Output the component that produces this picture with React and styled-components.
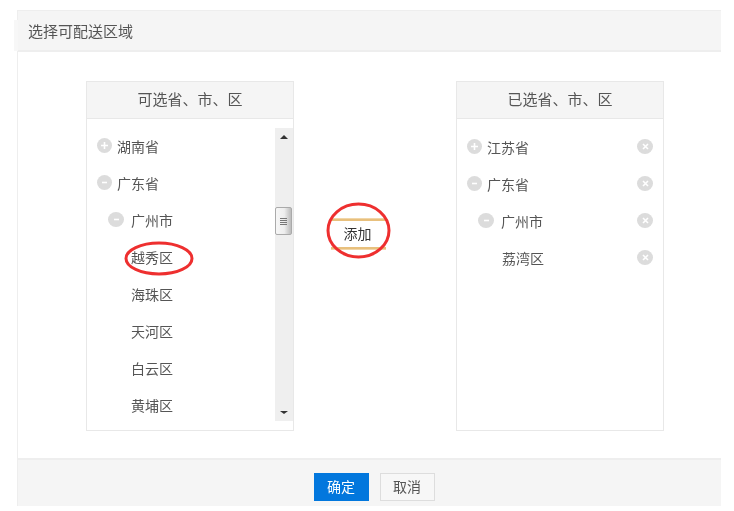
import React from 'react';

import styled, { createGlobalStyle } from 'styled-components';

const GlobalStyle = createGlobalStyle`
  html, body {
    background: #fff;
    margin: 0;
  }

  body {
    color: #555;
    font-family: "Liberation Sans", "Noto Sans CJK SC", sans-serif;
    font-size: 14px;
  }
`;

const Dialog = styled.div`
  border-left: 1px solid #eee;
  border-top: 1px solid #eee;
  box-sizing: border-box;
  filter: blur(0.35px);
  margin: 10px 0 0 17px;
  position: relative;
  width: 704px;

  &::before {
    background: #f7f7f7;
    content: '';
    height: 31px;
    left: -4px;
    position: absolute;
    top: 9px;
    width: 4px;
  }
`;

const Header = styled.div`
  align-items: center;
  background: #f5f5f5;
  border-bottom: 2px solid #eee;
  box-sizing: border-box;
  display: flex;
  font-size: 15px;
  height: 41px;
  padding: 0 0 1px 10px;
`;

const Body = styled.div`
  box-sizing: border-box;
  display: flex;
  height: 406px;
  padding: 29px 0 0 68px;
`;

const Panel = styled.div`
  border: 1px solid #e8e8e8;
  box-sizing: border-box;
  display: flex;
  flex-direction: column;
  height: 350px;
  width: 208px;
`;

const PanelTitle = styled.div`
  align-items: center;
  background: #f5f5f5;
  border-bottom: 1px solid #e8e8e8;
  box-sizing: border-box;
  display: flex;
  font-size: 15px;
  height: 37px;
  justify-content: center;
  padding-bottom: 3px;
`;

const PanelBody = styled.div`
  display: flex;
  flex: 1;
  min-height: 0;
  padding-top: ${props => props.$top}px;
`;

const List = styled.div`
  flex: 1;
  padding-right: ${props => props.$right}px;
`;

const Row = styled.div`
  align-items: center;
  display: flex;
  height: 37px;
  padding-left: ${props => props.$indent}px;
`;

const Label = styled.span`
  flex: 1;
  margin-left: ${props => props.$gap}px;
  padding-bottom: 2px;
`;

const Badge = styled.span`
  align-items: center;
  background: #dcdcdc;
  border-radius: 50%;
  color: #fff;
  display: flex;
  height: 15px;
  justify-content: center;
  margin-top: -2px;
  width: ${props => (props.$wide ? 16 : 15)}px;
`;

const Scrollbar = styled.div`
  background: #efefef;
  height: 293px;
  position: relative;
  width: 18px;
`;

const ArrowUp = styled.span`
  border-bottom: 4px solid #333;
  border-left: 4px solid transparent;
  border-right: 4px solid transparent;
  left: 5px;
  position: absolute;
  top: 7px;
`;

const ArrowDown = styled.span`
  border-left: 4px solid transparent;
  border-right: 4px solid transparent;
  border-top: 3px solid #333;
  bottom: 7px;
  left: 5px;
  position: absolute;
`;

const Thumb = styled.div`
  align-items: center;
  background: linear-gradient(90deg, #f6f6f6, #eee 55%, #bbb);
  border: 1px solid #aaa;
  border-radius: 2px;
  box-sizing: border-box;
  display: flex;
  flex-direction: column;
  gap: 1px;
  height: 28px;
  justify-content: center;
  left: 0;
  position: absolute;
  top: 79px;
  width: 17px;

  i {
    background: #777;
    height: 1px;
    width: 7px;
  }
`;

const Middle = styled.div`
  align-items: flex-start;
  box-sizing: border-box;
  display: flex;
  padding: 138px 0 0 37px;
  width: 162px;
`;

const AddButton = styled.button`
  background: #fff;
  border: solid #e8c07d;
  border-width: 2px 0;
  box-shadow: 0 -1px 0 #f1d6a8, 0 1px 0 #f1d6a8;
  box-sizing: border-box;
  color: #333;
  font: inherit;
  height: 30px;
  padding: 0 2px 2px 0;
  width: 55px;
`;

const Circle = styled.svg`
  left: ${props => props.$left}px;
  pointer-events: none;
  position: absolute;
  top: ${props => props.$top}px;
`;

const Footer = styled.div`
  align-items: flex-start;
  background: #f5f5f5;
  border-top: 2px solid #eee;
  box-sizing: border-box;
  display: flex;
  gap: 11px;
  height: 48px;
  justify-content: center;
  padding: 13px 0 0 9px;
`;

const Button = styled.button`
  background: ${props => (props.$primary ? '#0277dd' : '#f7f7f7')};
  border: 1px solid ${props => (props.$primary ? '#0277dd' : '#ddd')};
  box-sizing: border-box;
  color: ${props => (props.$primary ? '#fff' : '#555')};
  font: inherit;
  height: 28px;
  padding: 0 0 2px;
  width: 55px;
`;

const Plus = () => (
  <svg width="9" height="9" viewBox="0 0 9 9">
    <path d="M1 4.5h7M4.5 1v7" stroke="#fff" strokeWidth="1.6" />
  </svg>
);

const Minus = () => (
  <svg width="9" height="9" viewBox="0 0 9 9">
    <path d="M2 4.5h5" stroke="#fff" strokeWidth="1.6" />
  </svg>
);

const Cross = () => (
  <svg width="9" height="9" viewBox="0 0 9 9">
    <path d="M2 2l5 5M7 2l-5 5" stroke="#fff" strokeWidth="1.6" />
  </svg>
);

const available = [
  { text: '湖南省', indent: 10, gap: 5, icon: 'plus' },
  { text: '广东省', indent: 10, gap: 5, icon: 'minus' },
  { text: '广州市', indent: 21, gap: 7, icon: 'minus', wide: true },
  { text: '越秀区', indent: 21, gap: 23 },
  { text: '海珠区', indent: 21, gap: 23 },
  { text: '天河区', indent: 21, gap: 23 },
  { text: '白云区', indent: 21, gap: 23 },
  { text: '黄埔区', indent: 21, gap: 23 },
];

const chosen = [
  { text: '江苏省', indent: 10, gap: 5, icon: 'plus' },
  { text: '广东省', indent: 10, gap: 5, icon: 'minus' },
  { text: '广州市', indent: 21, gap: 7, icon: 'minus', wide: true },
  { text: '荔湾区', indent: 21, gap: 24 },
];

const TreeRow = ({ item, removable }) => (
  <Row $indent={item.indent}>
    {item.icon && (
      <Badge $wide={item.wide}>{item.icon === 'plus' ? <Plus /> : <Minus />}</Badge>
    )}
    <Label $gap={item.gap}>{item.text}</Label>
    {removable && (
      <Badge $wide>
        <Cross />
      </Badge>
    )}
  </Row>
);

const App = () => {
  return (
    <>
      <GlobalStyle />
      <Dialog>
        <Header>选择可配送区域</Header>
        <Body>
          <Panel>
            <PanelTitle>可选省、市、区</PanelTitle>
            <PanelBody $top={9}>
              <List $right={0}>
                {available.map(item => (
                  <TreeRow key={item.text} item={item} />
                ))}
              </List>
              <Scrollbar>
                <ArrowUp />
                <Thumb>
                  <i />
                  <i />
                  <i />
                  <i />
                </Thumb>
                <ArrowDown />
              </Scrollbar>
            </PanelBody>
          </Panel>
          <Middle>
            <AddButton>添加</AddButton>
          </Middle>
          <Panel>
            <PanelTitle>已选省、市、区</PanelTitle>
            <PanelBody $top={10}>
              <List $right={10}>
                {chosen.map(item => (
                  <TreeRow key={item.text} item={item} removable />
                ))}
              </List>
            </PanelBody>
          </Panel>
        </Body>
        <Footer>
          <Button $primary>确定</Button>
          <Button>取消</Button>
        </Footer>
        <Circle $left={106} $top={230} width="70" height="35" viewBox="0 0 70 35">
          <ellipse cx="35" cy="17.5" rx="33" ry="15.5" fill="none" stroke="#ee2f2f" strokeWidth="3" />
        </Circle>
        <Circle $left={308} $top={191} width="65" height="57" viewBox="0 0 65 57">
          <ellipse cx="32.5" cy="28.5" rx="30.5" ry="26.5" fill="none" stroke="#ee2f2f" strokeWidth="3" />
        </Circle>
      </Dialog>
    </>
  );
};

export default App;
